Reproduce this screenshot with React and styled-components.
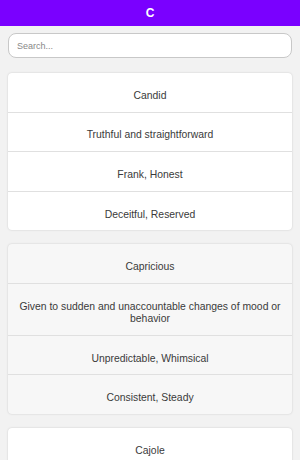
import styled, { createGlobalStyle } from 'styled-components';

const GlobalStyle = createGlobalStyle`
  body {
    margin: 0;
    background: #f2f2f2;
    font-family: "Liberation Sans", Arial, sans-serif;
  }
`;

const Header = styled.header`
  height: 26px;
  background: #7a00ff;
  color: white;
  font-weight: bold;
  font-size: 12px;
  display: flex;
  align-items: center;
  justify-content: center;
`;

const Main = styled.main`
  padding: 7px 8px 0;
  display: flex;
  flex-direction: column;
`;

const Search = styled.input`
  box-sizing: border-box;
  width: 100%;
  height: 25px;
  border: 1px solid #c8c8c8;
  border-radius: 8px;
  padding: 0 8px;
  font-size: 9px;
  font-family: "Liberation Sans", Arial, sans-serif;
  background: white;
  outline: none;
  margin-bottom: 15px;

  &::placeholder {
    color: #888;
  }
`;

const Card = styled.div`
  background: ${(p) => (p.$alt ? '#f7f7f7' : '#ffffff')};
  border-radius: 4px;
  box-shadow: 0 0 2px rgba(0, 0, 0, 0.18);
  margin-bottom: 14px;
  overflow: hidden;
`;

const Row = styled.div`
  padding: 16.8px 6px 9.5px;
  text-align: center;
  font-size: 10.4px;
  line-height: 12.3px;
  color: #3a3a3a;
  border-top: 1px solid #e0e0e0;

  &:first-child {
    border-top: none;
  }
`;

const words = [
  ['Candid', 'Truthful and straightforward', 'Frank, Honest', 'Deceitful, Reserved'],
  [
    'Capricious',
    'Given to sudden and unaccountable changes of mood or behavior',
    'Unpredictable, Whimsical',
    'Consistent, Steady',
  ],
  ['Cajole', 'Persuade someone to do something by flattery', 'Coax, Wheedle', 'Force, Compel'],
];

export default function App() {
  return (
    <>
      <GlobalStyle />
      <Header>C</Header>
      <Main>
        <Search placeholder="Search..." />
        {words.map((w, i) => (
          <Card key={w[0]} $alt={i % 2 === 1}>
            {w.map((t) => (
              <Row key={t}>{t}</Row>
            ))}
          </Card>
        ))}
      </Main>
    </>
  );
}
